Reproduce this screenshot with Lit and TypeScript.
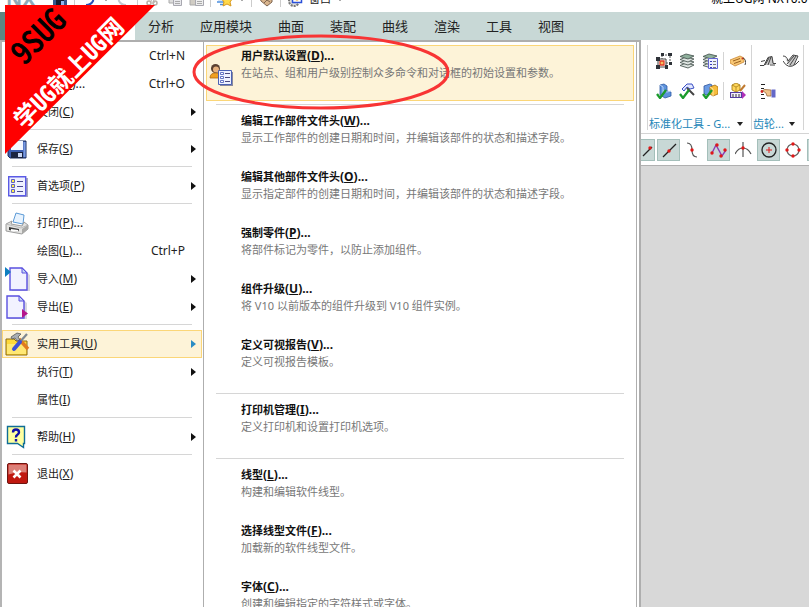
import { LitElement, html, css, svg, nothing, TemplateResult } from "lit";
import { customElement, property } from "lit/decorators.js";

type Art = TemplateResult;

const sheet = svg`<path d="M7 3h12l6 5v16H7z" fill="#9a9ab0" opacity=".4"/><path d="M5 1h12l5 5v17H5z" fill="#f2f2ff" stroke="#5a50e0" stroke-width="1.4"/><path d="M17 1v5h5z" fill="#c3d6f2" stroke="#5a50e0"/>`;

const menuArt: Record<string, Art> = {
  save: svg`<path d="M3 4h18v17H5l-2-2z" fill="#3c5eb0" stroke="#1c2e5e"/><path d="M6 4h12v9H6z" fill="#f4f7ff"/><path d="M6 15h12v6H6z" fill="#1b2440"/><path d="M13 16h4v4h-4z" fill="#c9d6f2"/><path d="M18.5 5h2v15h-2z" fill="#7b9be0"/>`,
  prefs: svg`<path d="M5 4h18v19H5z" fill="#a8a8bc"/><path d="M3.7 2.7h17v19h-17z" fill="#eef0ff" stroke="#5a5ae6" stroke-width="1.4"/><g fill="#fff04a" stroke="#5050c0" stroke-width=".9"><path d="M6.5 5.5h3v3h-3zM6.5 10.5h3v3h-3zM6.5 15.5h3v3h-3z"/></g><path d="M12 7.5h6M12 12.5h6M12 17.5h6" stroke="#4a4a90"/>`,
  print: svg`<path d="M8 11l3-9 8 2-1 9z" fill="#e8f3fe" stroke="#5b9ad6"/><path d="M1 13l6-3-1 3 11 2 2-4 4 3v4l-6 5-16-3z" fill="#e4e4e2" stroke="#888" stroke-width=".8"/><path d="M1 13l15 4 7-3" fill="none" stroke="#bbb"/><path d="M4 16l10 2v3L4 19z" fill="#3a3a3a"/><path d="M6 18l7 1 1 2-8-1z" fill="#fff"/><path d="M17 18l6-4v4l-6 5z" fill="#a9a9a7"/>`,
  import: svg`${sheet}<path d="M0 0l6 5-6 5z" fill="#0e7fc0"/>`,
  export: svg`<g transform="translate(-3 0)">${sheet}</g><path d="M17 14l6 4.500-6 4.500z" fill="#b5158c"/>`,
  tools: svg`<path d="M1 7h8l2 2h11v14H1z" fill="#ffd83a" stroke="#8a6a10"/><path d="M2 12h19v10H2z" fill="#ffe873"/><path d="M14 7l9 10" stroke="#e07a20" stroke-width="3.400"/><path d="M6 5l6-4 4 1-3 3 2 3-3 1-2-3-3 1z" fill="#a8aeb4" stroke="#555" stroke-width=".8"/><path d="M22 2l-8 9" stroke="#7f8790" stroke-width="2.200"/><path d="M15 10l-6 7" stroke="#3d50d8" stroke-width="4" stroke-linecap="round"/>`,
  help: svg`<path d="M2.500 1.500h17v17h-1v4l-6-4h-10z" fill="#ffffa0" stroke="#0f6d96" stroke-width="1.400"/><path d="M8 7.500q0-3 3-3t3 2.800q0 1.600-1.600 2.500T11 12.500M11 14v2.500" fill="none" stroke="#1010a8" stroke-width="2.400"/>`,
  exit: svg`<rect x="2.500" y="1.500" width="20" height="20" rx="1.500" fill="#c01810" stroke="#6e1510"/><path d="M3.500 2.500h18v8q-9-1-18 2z" fill="#dc8078"/><path d="M8.500 8.500l7 7m0-7l-7 7" stroke="#fff" stroke-width="2.600"/>`,
  user: svg`<circle cx="6.500" cy="5.500" r="4.500" fill="#5b4030"/><circle cx="7" cy="6.500" r="3" fill="#e8b27e"/><path d="M1 15q0-5 5.500-5t6.500 5z" fill="#f0a020" stroke="#b06a10" stroke-width=".8"/><path d="M11 9h13v14H11z" fill="#8a8a9c"/><path d="M9.500 7.500h13v14h-13z" fill="#eef1ff" stroke="#4b62b4"/><path d="M11.500 9.500h3v2h-3zm0 4h3v2h-3zm0 4h3v2h-3z" fill="#fff" stroke="#5668c0" stroke-width=".9"/><path d="M16 10.500h5m-5 4h5m-5 4h5" stroke="#4a4a80"/>`,
};

const layers = svg`<g fill="#dfe5e2" stroke="#4d5a56" stroke-width=".9"><path d="M1 12.500l6-2.500 8 2-6 3z"/><path d="M1 9.500L7 7l8 2-6 3z"/><path d="M1 6.500L7 4l8 2-6 3z"/><path d="M1 3.500L7 1l8 2-6 3z" fill="#8fb09c"/></g>`;
const check = svg`<path d="M1 11l3 4 6-8" fill="none" stroke="#1b9b2c" stroke-width="2.300"/>`;

const toolArt: Record<string, Art> = {
  network: svg`<path d="M6 2h8v8H6z" fill="none" stroke="#555" stroke-dasharray="2 1"/><path d="M2 6h8v8H2z" fill="#fff" stroke="#444"/><path d="M4 8h4v4H4z" fill="#f8c060" stroke="#e03c28" stroke-width="1.300"/><path d="M0 4h4v4H0zM0 12h4v4H0zM9 12h3v4H9zM5 0h3v3H5zM12 0h4v3h-4zM13 9h3v3h-3z" fill="#2e3238"/>`,
  layers,
  layerList: svg`${layers}<path d="M6.500 5.500h9v10h-9z" fill="#eef0ff" stroke="#6264d0"/><path d="M8 8h2v1H8zm0 3h2v1H8zm0 3h2v1H8z" fill="#3a3cb8"/><path d="M11 8.500h3m-3 3h3m-3 3h3" stroke="#777"/>`,
  tag: svg`<path d="M0 7l10-4 4 2v4l-9 4-5-3z" fill="#f8c774" stroke="#c98836" stroke-width=".8"/><path d="M3 8l7-2.500m-6 5l7-2.500" stroke="#9a6020"/><circle cx="12.500" cy="5.500" r="1" fill="#d03020"/><path d="M13 5q4 2 2 7" fill="none" stroke="#444"/>`,
  block: svg`<path d="M4 2l4-1 3 2v5l4 1v4l-6 2-5-3z" fill="#5d92dc" stroke="#2f5aa4" stroke-width=".8"/><path d="M4 2l3 2v7m0-3l4 1 4-1" fill="none" stroke="#b9d4f8"/>${check}`,
  hammer: svg`<path d="M3 6l5-5h5l2 4-4 1-3-2-3 4z" fill="#e2e8ff" stroke="#3a4fc4"/><path d="M8 5l7 7" stroke="#444" stroke-width="2"/>${check}`,
  cubes: svg`<path d="M2 3l6-2 2 1v8l-6 2-2-2z" fill="#6a9be4" stroke="#31569c" stroke-width=".8"/><path d="M8 4l5-2 3 2v7l-5 2-3-2z" fill="#f7bd3c" stroke="#a66d10" stroke-width=".8"/><path d="M8 4l3 2v7" fill="none" stroke="#ffe59c"/>${check}`,
  edit: svg`<path d="M2 2l4-2 4 2v5l-4 2-4-2z" fill="#ffd65a" stroke="#a8801c" stroke-width=".9"/><path d="M2 2l4 2 4-2M6 4v5" fill="none" stroke="#a8801c" stroke-width=".8"/><path d="M10 8l5-6" stroke="#c07a30" stroke-width="2"/><path d="M.5 9.500h11v5H.5z" fill="#f5efff" stroke="#543ba0" stroke-width="1.200"/><path d="M3 11v3m3-3v3m3-3v3" stroke="#333"/><path d="M12 8l4 4-4 4z" fill="#b030b8"/>`,
  gearA: svg`<path d="M4 12l4-8 4-1 2 7-5 2z" fill="#c9c9c9"/><path d="M0 12.500h4l4-8 4-1 1 7h3M5 12l4-7M8 12l3-8M10 12h5M1 8.500l4-1" fill="none" stroke="#444"/>`,
  gearB: svg`<path d="M2 5l3 3 5-6 4 1-3 9-4 2z" fill="#c9c9c9"/><path d="M0 3q4 0 5 5l5-6 5 1-4 9M4 11l7-8M7 12l6-9M0 8q5 9 13 3l3-3" fill="none" stroke="#444"/>`,
  pointList: svg`<path d="M1 1.500h4M1 5.500h3M1 11.500h3M1 15.500h4" stroke="#222" stroke-width="1.200"/><circle cx="2" cy="8.500" r="1.400" fill="#d02020"/><path d="M3 8q0-1.500 2-1.500l6 .5v6H7l-1-3z" fill="#f0c48c" stroke="#9a6a3c" stroke-width=".8"/><path d="M11.500 6.500h4v8h-4z" fill="#6468c8"/>`,
};

const dot = (x: number, y: number) => svg`<circle cx=${x} cy=${y} r="1.700" fill="#e01818"/>`;
const snapArt: Record<string, Art> = {
  end: svg`<path d="M5 14l9-9" stroke="#222" stroke-width="1.300"/>${dot(12, 6)}`,
  mid: svg`<path d="M3 16L16 3" stroke="#222" stroke-width="1.300"/>${dot(9, 10)}`,
  curve: svg`<path d="M2 2q5 0 5 7t5 7" fill="none" stroke="#555" stroke-width="1.200"/>${dot(7, 9)}`,
  spline: svg`<path d="M2 12l4-8 6 11 4-6" fill="none" stroke="#8a3cb4" stroke-width="1.400"/>${dot(2, 12)}${dot(7, 4)}${dot(11, 15)}${dot(15, 9)}`,
  cross: svg`<path d="M8 1v15M0 13q3-6 8-6t8 6" fill="none" stroke="#555" stroke-width="1.200"/>${dot(8, 7)}`,
  centre: svg`<circle cx="9" cy="9" r="7" fill="none" stroke="#222" stroke-width="1.300"/><path d="M6 9h6M9 6v6" stroke="#e01818"/>`,
  quad: svg`<circle cx="8" cy="9" r="6" fill="none" stroke="#666" stroke-width="1.200"/>${dot(8, 3)}${dot(14, 9)}${dot(8, 15)}${dot(2, 9)}`,
};

const quickArt: Record<string, Art> = {
  save: svg`<path d="M1 1h14v14H1z" fill="#34588e"/><path d="M4 9h8v6H4z" fill="#151c30"/><path d="M9 10h3v4H9z" fill="#90b8f0"/>`,
  undo: svg`<path d="M2 6q12-3 10 4-2 4-7 4" fill="none" stroke="#2850b8" stroke-width="2"/>`,
  redo: svg`<path d="M14 6Q2 3 4 10q2 4 7 4" fill="none" stroke="#c4c8d0" stroke-width="2"/>`,
  cut: svg`<path d="M4 1l7 11M12 1L6 12" stroke="#bbb"/><circle cx="5" cy="12" r="2" fill="none" stroke="#b8b0a8" stroke-width="1.500"/><circle cx="11" cy="12" r="2" fill="none" stroke="#b8b0a8" stroke-width="1.500"/>`,
  copy: svg`<path d="M3 2h8v10H3z" fill="#ddd" stroke="#aaa"/><path d="M7.500 5.500h8v9h-8z" fill="#e8e8ec" stroke="#a8a8b0"/><path d="M9 10.500h5M9 12.500h5" stroke="#aaa"/>`,
  paste: svg`<path d="M2 2h10v12H2z" fill="#d0ccc4" stroke="#aaa"/><path d="M7.500 6.500h8v8h-8z" fill="#eee" stroke="#a8a8b0"/><path d="M9 10.500h5M9 12.500h5" stroke="#aaa"/>`,
  star: svg`<path d="M1 8.500h7M0 11h8M3 13.500h5" stroke="#4b8fe0" stroke-width="1.500"/><path d="M10 2l2 4 4 1-3 4 1 4-4-2-4 2 1-4-3-4 4-1z" fill="#ffd94a" stroke="#d89a20"/>`,
  hand: svg`<path d="M2 7l6-3 6 3v4l-5 4-6-5z" fill="#d9b48c" stroke="#7d6450"/><path d="M6 12l3-3 3 2" stroke="#7d6450" fill="none"/>`,
  window: svg`<circle cx="7" cy="10" r="5" fill="#ddd" stroke="#777" stroke-width="2" stroke-dasharray="2 1"/><path d="M5.500 3.500h9v8h-9z" fill="#fff" stroke="#2b50d8" stroke-width="1.500"/><circle cx="10" cy="7.500" r="2" fill="#f0a020"/>`,
};

const icon = (art: Art, box: number, name = "") =>
  html`<svg class="icon ${name}" viewBox="0 0 ${box} ${box}" width=${box} height=${box} aria-hidden="true">${art}</svg>`;

const caption = (text: string, key: string, dots: boolean) =>
  html`${text}<span class="key">(<u>${key}</u>)${dots ? "..." : ""}</span>`;

interface MenuRow {
  text: string;
  key: string;
  dots?: boolean;
  art?: string;
  shortcut?: string;
  more?: boolean;
  open?: boolean;
}

const fileMenu: MenuRow[][] = [
  [
    { text: "新建", key: "N", dots: true, shortcut: "Ctrl+N" },
    { text: "打开", key: "O", dots: true, shortcut: "Ctrl+O" },
    { text: "关闭", key: "C", more: true },
  ],
  [{ text: "保存", key: "S", art: "save", more: true }],
  [{ text: "首选项", key: "P", art: "prefs", more: true }],
  [
    { text: "打印", key: "P", dots: true, art: "print" },
    { text: "绘图", key: "L", dots: true, shortcut: "Ctrl+P" },
    { text: "导入", key: "M", art: "import", more: true },
    { text: "导出", key: "E", art: "export", more: true },
  ],
  [
    { text: "实用工具", key: "U", art: "tools", more: true, open: true },
    { text: "执行", key: "T", more: true },
    { text: "属性", key: "I" },
  ],
  [{ text: "帮助", key: "H", art: "help", more: true }],
  [{ text: "退出", key: "X", art: "exit" }],
];

interface Utility {
  text: string;
  key: string;
  about: string;
  art?: string;
}

const utilities: Utility[][] = [
  [{ text: "用户默认设置", key: "D", about: "在站点、组和用户级别控制众多命令和对话框的初始设置和参数。", art: "user" }],
  [
    { text: "编辑工作部件文件头", key: "W", about: "显示工作部件的创建日期和时间，并编辑该部件的状态和描述字段。" },
    { text: "编辑其他部件文件头", key: "O", about: "显示指定部件的创建日期和时间，并编辑该部件的状态和描述字段。" },
    { text: "强制零件", key: "P", about: "将部件标记为零件，以防止添加组件。" },
    { text: "组件升级", key: "U", about: "将 V10 以前版本的组件升级到 V10 组件实例。" },
    { text: "定义可视报告", key: "V", about: "定义可视报告模板。" },
  ],
  [{ text: "打印机管理", key: "I", about: "定义打印机和设置打印机选项。" }],
  [
    { text: "线型", key: "L", about: "构建和编辑软件线型。" },
    { text: "选择线型文件", key: "F", about: "加载新的软件线型文件。" },
    { text: "字体", key: "C", about: "创建和编辑指定的字符样式或字体。" },
  ],
];

const shared = css`
  * {
    box-sizing: border-box;
  }
  button {
    margin: 0;
    padding: 0;
    border: 0;
    background: none;
    color: inherit;
    font: inherit;
    text-align: left;
    white-space: nowrap;
  }
  .icon {
    display: block;
    flex: none;
  }
`;

@customElement("file-menu")
export class FileMenu extends LitElement {
  static styles = [
    shared,
    css`
      :host {
        display: block;
        background: #fff;
        border-left: 2px solid #b4b4b4;
        padding-right: 1px;
      }
      .row {
        display: grid;
        grid-template-columns: 34px 1fr auto 16px;
        align-items: center;
        width: 100%;
        height: 28px;
        border: 1px solid transparent;
      }
      .row.open {
        background: #fdf3d8;
        border-color: #fbd678;
      }
      .art {
        padding-left: 2px;
      }
      .key,
      .shortcut {
        font-size: 12px;
      }
      .arrow {
        justify-self: end;
        margin-right: 5px;
        width: 5px;
        height: 8px;
        background: #111;
        clip-path: polygon(0 0, 100% 50%, 0 100%);
      }
      .open .arrow {
        background: #2a8cc4;
      }
      .rule {
        margin: 3px 10px 5px;
        border: 0;
        border-top: 1px solid #d6d6d6;
      }
    `,
  ];

  render() {
    return html`<nav aria-label="文件">
      ${fileMenu.map(
        (group, i) => html`${i ? html`<hr class="rule" />` : nothing}${group.map(
          (r) => html`<button class="row ${r.open ? "open" : ""}">
            <span class="art">${r.art ? icon(menuArt[r.art], 25) : nothing}</span>
            <span>${caption(r.text, r.key, !!r.dots)}</span>
            <span class="shortcut">${r.shortcut ?? ""}</span>
            ${r.more ? html`<span class="arrow"></span>` : html`<span></span>`}
          </button>`
        )}`
      )}
    </nav>`;
  }
}

@customElement("utility-menu")
export class UtilityMenu extends LitElement {
  static styles = [
    shared,
    css`
      :host {
        display: block;
        overflow: hidden;
        background: #fff;
        border-right: 2px solid #aeaeae;
        padding-right: 2px;
      }
      .panel {
        height: 100%;
        padding: 3px 2px 0;
        border: solid #aeaeae;
        border-width: 0 1px;
      }
      .item {
        display: grid;
        grid-template-columns: 34px 1fr;
        width: 100%;
        height: 56px;
        padding-top: 1px;
        border: 1px solid transparent;
        align-content: start;
        line-height: 17px;
      }
      .item.hot {
        background: #fdf3d8;
        border-color: #fbd678;
      }
      .art {
        padding: 16px 0 0 2px;
        height: 34px;
      }
      .name {
        display: block;
        font-weight: 700;
        color: #111;
      }
      .key {
        font-size: 12px;
      }
      .about {
        display: block;
        color: #777;
      }
      .rule {
        margin: 3px 10px 5px;
        border: 0;
        border-top: 1px solid #d6d6d6;
      }
    `,
  ];

  render() {
    return html`<nav class="panel" aria-label="实用工具">
      ${utilities.map(
        (group, i) => html`${i ? html`<hr class="rule" />` : nothing}${group.map(
          (u) => html`<button class="item ${u.art ? "hot" : ""}">
            <span class="art">${u.art ? icon(menuArt[u.art], 25) : nothing}</span>
            <span>
              <span class="name">${caption(u.text, u.key, true)}</span>
              <span class="about">${u.about}</span>
            </span>
          </button>`
        )}`
      )}
    </nav>`;
  }
}

@customElement("ribbon-group")
export class RibbonGroup extends LitElement {
  @property() label = "";
  @property({ attribute: false }) rows: string[][] = [];

  static styles = [
    shared,
    css`
      :host {
        display: flex;
        flex-direction: column;
        justify-content: space-between;
        flex: none;
        height: 85px;
        padding-top: 1px;
        border-left: 1px solid #d4d4d4;
      }
      .tools {
        padding-left: 4px;
      }
      .line {
        display: flex;
        align-items: center;
        height: 30px;
      }
      .tool {
        display: grid;
        place-items: center;
        width: 23px;
        height: 23px;
      }
      .split {
        width: 1px;
        height: 18px;
        margin: 0 2px;
        background: #d4d4d4;
      }
      .label {
        display: flex;
        align-items: center;
        justify-content: space-between;
        padding: 0 8px 0 1px;
        line-height: 12px;
        color: #2486b8;
      }
      .drop {
        width: 6px;
        height: 4px;
        background: #222;
        clip-path: polygon(0 0, 100% 0, 50% 100%);
      }
    `,
  ];

  render() {
    return html`<div class="tools">
        ${this.rows.map(
          (row) => html`<div class="line">
            ${row.map((name) =>
              name === "|"
                ? html`<span class="split"></span>`
                : html`<button class="tool" aria-label=${name}>${icon(toolArt[name], 16)}</button>`
            )}
          </div>`
        )}
      </div>
      ${this.label ? html`<button class="label">${this.label}<span class="drop"></span></button>` : nothing}`;
  }
}

@customElement("app-root")
export class AppRoot extends LitElement {
  static styles = [
    shared,
    css`
      :host {
        display: flex;
        flex-direction: column;
        position: relative;
        height: 100vh;
        overflow: hidden;
        background: #fff;
        color: #222;
        font: 11px/14px "Noto Sans", "Noto Sans CJK SC", sans-serif;
      }
      .title-bar {
        display: flex;
        align-items: center;
        gap: 6px;
        flex: none;
        height: 24px;
        margin-top: -12px;
        padding: 0 0 2px 6px;
        white-space: nowrap;
      }
      .logo {
        width: 40px;
        color: #8fa9b8;
        font-size: 20px;
        font-weight: 700;
      }
      .mark {
        width: 1px;
        height: 16px;
        background: #ccc;
      }
      .drop {
        width: 6px;
        height: 4px;
        background: #222;
        clip-path: polygon(0 0, 100% 0, 50% 100%);
      }
      .caption {
        width: 98px;
        margin-left: auto;
        overflow: hidden;
        font-size: 12px;
        color: #000;
      }
      .tabs {
        display: flex;
        flex: none;
        height: 28px;
        background: #c8d8d6;
        font-size: 13px;
      }
      .tab {
        padding: 0 13px;
      }
      .file-tab {
        width: 66px;
        background: #5c8782;
        color: #fff;
        text-align: center;
      }
      .home-tab {
        width: 69px;
        background: #fff;
        text-align: center;
      }
      .body {
        display: grid;
        grid-template-columns: 203px minmax(0, 438fr) minmax(0, 168fr);
        grid-template-rows: minmax(0, 1fr);
        flex: 1;
        min-height: 0;
      }
      file-menu,
      utility-menu {
        border-top: 2px solid #aeaeae;
      }
      .work {
        display: flex;
        flex-direction: column;
        overflow: hidden;
      }
      .ribbon {
        display: flex;
        padding: 5px 0 3px 6px;
      }
      .standard {
        width: 104px;
      }
      .gears {
        width: 52px;
      }
      .snaps {
        display: flex;
        align-items: center;
        gap: 2px;
        height: 32px;
        border-top: 1px solid #d4d4d4;
      }
      .snap {
        display: flex;
        align-items: center;
        justify-content: center;
        flex: none;
        width: 23px;
        height: 22px;
        border: 1px solid transparent;
      }
      .snap.on {
        background: #c8d8d6;
        border-color: #a4bfba;
      }
      .snap.cut {
        justify-content: flex-end;
        width: 14px;
        border-left: 0;
        overflow: hidden;
      }
      .canvas {
        flex: 1;
        background: #d8d8d8;
        border-top: 1px solid #b0b0b0;
      }
      .overlay {
        position: absolute;
        top: 0;
        left: 0;
        pointer-events: none;
      }
      .brand {
        font: 31px "Noto Sans Mono CJK SC", "Noto Sans CJK SC", monospace;
        stroke: #000;
        stroke-width: 1px;
      }
      .slogan {
        font: 24px "Noto Sans Mono CJK SC", "Noto Sans CJK SC", monospace;
        font-weight: 700;
      }
    `,
  ];

  render() {
    const mark = html`<span class="mark"></span>`;
    const quick = (name: string) => icon(quickArt[name], 16);
    return html`
      <header class="title-bar">
        <span class="logo">NX</span>${quick("save")}${mark}${quick("undo")}
        <span class="drop"></span>${quick("redo")}${mark}${quick("cut")}${quick("copy")}${quick("paste")}
        ${mark}${quick("star")}<span class="drop"></span>${mark}${quick("hand")}${mark}${quick("window")}
        <span>窗口</span><span class="drop"></span>
        <span class="caption">就上UG网 NX10.0</span>
      </header>
      <nav class="tabs">
        <button class="file-tab">文件(F)</button>
        <button class="home-tab">主页</button>
        ${["分析", "应用模块", "曲面", "装配", "曲线", "渲染", "工具", "视图"].map(
          (t) => html`<button class="tab">${t}</button>`
        )}
      </nav>
      <main class="body">
        <file-menu></file-menu>
        <utility-menu></utility-menu>
        <section class="work">
          <div class="ribbon">
            <ribbon-group
              class="standard"
              label="标准化工具 - G..."
              .rows=${[
                ["network", "layers", "layerList", "|", "tag"],
                ["block", "hammer", "cubes", "|", "edit"],
              ]}
            ></ribbon-group>
            <ribbon-group class="gears" label="齿轮..." .rows=${[["gearA", "gearB"], ["pointList"]]}></ribbon-group>
            <ribbon-group></ribbon-group>
          </div>
          <div class="snaps">
            <button class="snap on cut" aria-label="端点">${icon(snapArt.end, 16)}</button>
            <button class="snap on" aria-label="中点">${icon(snapArt.mid, 18)}</button>
            <button class="snap" aria-label="控制点">${icon(snapArt.curve, 18)}</button>
            <button class="snap on" aria-label="极点">${icon(snapArt.spline, 18)}</button>
            <button class="snap" aria-label="交点">${icon(snapArt.cross, 18)}</button>
            <button class="snap on" aria-label="圆心">${icon(snapArt.centre, 18)}</button>
            <button class="snap" aria-label="象限点">${icon(snapArt.quad, 18)}</button>
            <button class="snap on" aria-label="现有点"></button>
          </div>
          <div class="canvas"></div>
        </section>
      </main>
      <svg class="overlay" width="460" height="160" viewBox="0 0 460 160">
        <path d="M5 5h150L5 154z" fill="#f00" />
        <text class="brand" transform="translate(24 66) rotate(-45)" fill="#000">9SUG</text>
        <text class="slogan" transform="translate(24 130) rotate(-45)" fill="#fff">学UG就上UG网</text>
        <ellipse cx="321" cy="72" rx="127" ry="36" fill="none" stroke="#f83434" stroke-width="3" />
      </svg>
    `;
  }
}
